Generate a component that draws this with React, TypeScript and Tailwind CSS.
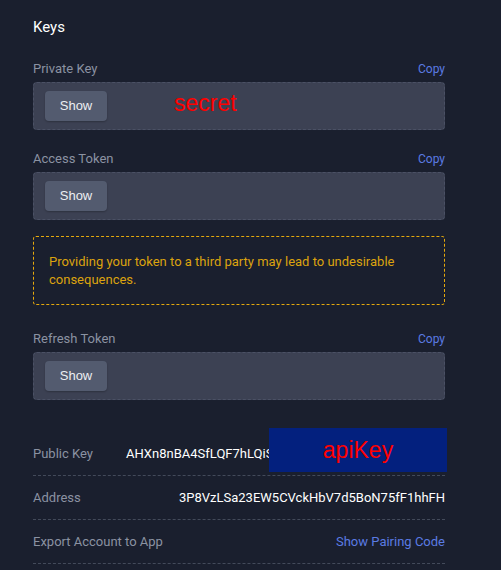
import React from 'react'

function SecretField({ label, overlay }: { label: string; overlay?: string }) {
  return (
    <div>
      <div className="flex items-center justify-between h-4 mb-[5px]">
        <span className="text-[13px] text-[#8b92a2]">{label}</span>
        <span className="text-[12px] text-[#5b7be3] cursor-pointer">Copy</span>
      </div>
      <div className="relative h-12 rounded-[4px] border border-dashed border-[#4b5165] bg-[#3c4153] pl-[11px] pt-2">
        <button className="w-[62px] h-[30px] rounded-[4px] bg-[#535b6f] text-[13px] text-[#eceef2] font-['Liberation_Sans',sans-serif] shadow-[0_1px_2px_rgba(0,0,0,0.25)]">
          Show
        </button>
        {overlay && (
          <span className="absolute left-[140px] top-[6px] text-[23px] leading-[28px] text-[#ff0000] font-['Liberation_Sans',sans-serif]">
            {overlay}
          </span>
        )}
      </div>
    </div>
  )
}

function InfoRow({ label, children }: { label: string; children: React.ReactNode }) {
  return (
    <div className="relative flex items-center justify-between h-[44px] border-b border-dashed border-[#434a5a]">
      <span className="text-[13px] text-[#8b92a2]">{label}</span>
      {children}
    </div>
  )
}

export default function App() {
  return (
    <div className="min-h-[570px] bg-[#1a1f2e] font-['Roboto',sans-serif] pt-[17px]">
      <div className="ml-[33px] w-[412px]">
        <h2 className="text-[15px] leading-5 text-white">Keys</h2>

        <div className="mt-6">
          <SecretField label="Private Key" overlay="secret" />
        </div>

        <div className="mt-[21px]">
          <SecretField label="Access Token" />
        </div>

        <div className="mt-4 rounded-[3px] border border-dashed border-[#e6a90c] px-[15px] pt-4 pb-[15px]">
          <p className="text-[13px] leading-[18px] text-[#dca30e]">
            Providing your token to a third party may lead to undesirable consequences.
          </p>
        </div>

        <div className="mt-[26px]">
          <SecretField label="Refresh Token" />
        </div>

        <div className="mt-[32px]">
          <InfoRow label="Public Key">
            <span className="absolute left-[93px] text-[13px] text-white">
              AHXn8nBA4SfLQF7hLQiS3Xk1
            </span>
            <div className="absolute left-[236px] top-[-4px] w-[178px] h-[44px] bg-[#03207e] flex items-center justify-center">
              <span className="text-[23px] text-[#ff0000] font-['Liberation_Sans',sans-serif]">apiKey</span>
            </div>
          </InfoRow>
          <InfoRow label="Address">
            <span className="text-[13px] text-white">3P8VzLSa23EW5CVckHbV7d5BoN75fF1hhFH</span>
          </InfoRow>
          <InfoRow label="Export Account to App">
            <span className="text-[13px] text-[#5b7be3] cursor-pointer">Show Pairing Code</span>
          </InfoRow>
        </div>
      </div>
    </div>
  )
}
